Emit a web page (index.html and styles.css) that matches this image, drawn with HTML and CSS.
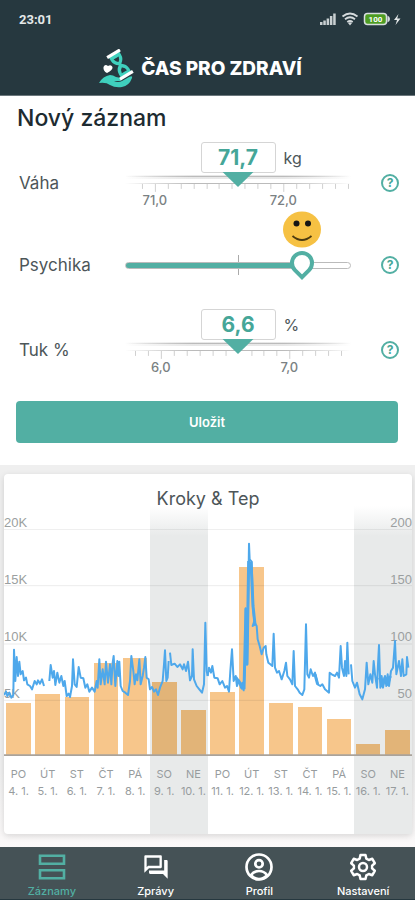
FILE: index.html
```html
<!DOCTYPE html>
<html lang="cs">
<head>
<meta charset="utf-8">
<meta name="viewport" content="width=device-width, initial-scale=1">
<title>Čas pro zdraví</title>
<link rel="stylesheet" href="styles.css">
</head>
<body>
<header class="top">
  <div class="status">
    <span>23:01</span>
    <svg class="status-icons" width="82" height="16" viewBox="0 0 82 16" aria-hidden="true">
      <g fill="#c9d0d2"><path d="M0 11h2.500v3H0zM3.300 9.500h2.500V14H3.300zM6.600 7.500h2.500V14H6.600zM9.900 5h2.500v9H9.900zM13.200 2.500h2.500V14h-2.500z"/></g>
      <g fill="none" stroke="#d5dbdd" stroke-width="1.800"><path d="M22.500 5.500q7.500-6 15 0M25 8.300q5-4 10 0M27.300 11q2.700-2 5.400 0"/></g>
      <path d="M30 14.500l-2-2.500q2-1.500 4 0z" fill="#d5dbdd"/>
      <rect x="44.500" y="2.500" width="22" height="11" rx="3" fill="#4d9c22" stroke="#d8dedf" stroke-width="1.500"/>
      <path d="M67.500 4.500q2.500 1 2.500 3.500t-2.500 3.500z" fill="#d8dedf"/>
      <text x="55.500" y="11" class="battery">100</text>
      <path d="M78.500 3L74 9h3l-1.500 5L80.500 7.500h-3.300z" fill="#e4e8e9"/>
    </svg>
  </div>
  <div class="brand">
    <svg width="35" height="39" viewBox="0 0 35 39" aria-hidden="true">
      <path d="M0 34Q4 27 11 26q3 0 6 2l5 1q2 2-1 3l-6 0q4 2 8 0l7-4q4-2 3 1-3 8-10 9-7 1-12-2-4-3-11-2z" fill="#3fd0bd"/>
      <g transform="translate(21 15.500) rotate(-31)">
        <path d="M-6-12v4q0 5 4.500 8Q-6 3-6 8v4H6V8Q6 3 1.500 0 6-3 6-8v-4z" fill="#3fd0bd"/>
        <path d="M-3-7.500h6q-1 3.500-3 4.500-2-1-3-4.500zM0 3.500Q3 5 3 8.500h-6Q-3 5 0 3.500z" fill="#26383f"/>
        <path d="M-7.500-12.500h15M-7.500 12.500h15" stroke="#fff" stroke-width="3.200"/>
      </g>
      <path d="M8 24q-4-2-3.500-6Q6 14.500 9 17q3-2 4.500 1 .5 3-5.500 6z" fill="#fff"/>
    </svg>
    <span class="brand-name">ČAS PRO ZDRAVÍ</span>
  </div>
</header>

<main>
  <form class="entry">
    <h1>Nový záznam</h1>

    <div class="field">
      <div class="value"><input id="weight" type="text" value="71,7"><span>kg</span></div>
      <label for="weight">Váha</label>
      <svg class="ruler" viewBox="0 0 227 36" aria-hidden="true">
        <defs>
          <linearGradient id="fade"><stop offset="0" stop-color="#aaa" stop-opacity="0"/><stop offset=".3" stop-color="#bbb"/><stop offset=".7" stop-color="#bbb"/><stop offset="1" stop-color="#aaa" stop-opacity="0"/></linearGradient>
        </defs>
        <path d="M0 3h227v4H0z" fill="url(#fade)" opacity=".35"/>
        <path d="M0 4h227v1H0zM0 11h227v1H0z" fill="url(#fade)"/>
        <path class="ticks" d="M17.500 12v5M43.500 12v5M56.500 12v5M69.500 12v5M82.500 12v5M94.500 12v5M107.500 12v5M120.500 12v5M133.500 12v5M146.500 12v5M172.500 12v5M185.500 12v5M198.500 12v5M211.500 12v5M224.500 12v5M30.500 12v8M159.500 12v8"/>
        <path d="M98 0h31l-15.500 15z" fill="#52afa3"/>
        <text x="30" y="33">71,0</text><text x="159" y="33">72,0</text>
      </svg>
      <button type="button" class="help" aria-label="Nápověda: Váha">?</button>
    </div>

    <div class="field mood">
      <svg class="face" width="38" height="37" viewBox="0 0 38 37" aria-hidden="true">
        <ellipse cx="19" cy="18.500" rx="19" ry="18" fill="#f6c143"/>
        <circle cx="13.500" cy="12.500" r="3" fill="#151515"/><circle cx="25" cy="12.500" r="3" fill="#151515"/>
        <path d="M9.500 25q9.500 8 19 0" fill="none" stroke="#4b3a10" stroke-width="1.800"/>
      </svg>
      <label for="mood">Psychika</label>
      <input id="mood" class="slider" type="range" min="0" max="100" value="82">
      <button type="button" class="help" aria-label="Nápověda: Psychika">?</button>
    </div>

    <div class="field">
      <div class="value"><input id="fat" type="text" value="6,6"><span>%</span></div>
      <label for="fat">Tuk %</label>
      <svg class="ruler" viewBox="0 0 227 36" aria-hidden="true">
        <path d="M0 3h227v4H0z" fill="url(#fade)" opacity=".35"/>
        <path d="M0 4h227v1H0zM0 11h227v1H0z" fill="url(#fade)"/>
        <path class="ticks" d="M10.500 12v5M23.500 12v5M49.500 12v5M62.500 12v5M75.500 12v5M88.500 12v5M101.500 12v5M127.500 12v5M139.500 12v5M152.500 12v5M178.500 12v5M191.500 12v5M204.500 12v5M217.500 12v5M36.500 12v8M165.500 12v8"/>
        <path d="M98 0h31l-15.500 15z" fill="#52afa3"/>
        <text x="36" y="33">6,0</text><text x="165" y="33">7,0</text>
      </svg>
      <button type="button" class="help" aria-label="Nápověda: Tuk">?</button>
    </div>

    <button type="submit" class="save">Uložit</button>
  </form>

  <section class="card">
    <h2>Kroky &amp; Tep</h2>
    <div class="chart">
      <ol class="days">
        <li><div class="bar" style="height:52px"></div><span>PO</span><span>4. 1.</span></li>
        <li><div class="bar" style="height:61px"></div><span>ÚT</span><span>5. 1.</span></li>
        <li><div class="bar" style="height:58px"></div><span>ST</span><span>6. 1.</span></li>
        <li><div class="bar" style="height:92px"></div><span>ČT</span><span>7. 1.</span></li>
        <li><div class="bar" style="height:97px"></div><span>PÁ</span><span>8. 1.</span></li>
        <li class="weekend"><div class="bar" style="height:73px"></div><span>SO</span><span>9. 1.</span></li>
        <li class="weekend"><div class="bar" style="height:45px"></div><span>NE</span><span>10. 1.</span></li>
        <li><div class="bar" style="height:63px"></div><span>PO</span><span>11. 1.</span></li>
        <li><div class="bar" style="height:188px"></div><span>ÚT</span><span>12. 1.</span></li>
        <li><div class="bar" style="height:52px"></div><span>ST</span><span>13. 1.</span></li>
        <li><div class="bar" style="height:48px"></div><span>ČT</span><span>14. 1.</span></li>
        <li><div class="bar" style="height:36px"></div><span>PÁ</span><span>15. 1.</span></li>
        <li class="weekend"><div class="bar" style="height:11px"></div><span>SO</span><span>16. 1.</span></li>
        <li class="weekend"><div class="bar" style="height:25px"></div><span>NE</span><span>17. 1.</span></li>
      </ol>
      <div class="axis"><span>20K</span><span>200</span><span>15K</span><span>150</span><span>10K</span><span>100</span><span>5K</span><span>50</span></div>
      <svg class="pulse" viewBox="12 -276 1224 681" preserveAspectRatio="none" aria-hidden="true">
        <path class="grid" d="M12-275H1236M12-106H1236M12 69H1236M12 238H1236"/>
        <path class="base" d="M12 403H1236"/>
        <path class="line" d="M12 222L18 212 22 225 28 215 34 230 40 222 42 86 46 180 50 108 54 165 58 122 62 160 68 150 72 178 78 170 82 190 90 195 96 205 104 180 110 190 114 178 120 188 126 175 132 195M148 180L152 132 158 170 162 150 166 192 172 155 178 185 184 165 190 195 194 180 200 225 206 218 210 228 216 195 219 115 224 190 230 198 236 138 242 170 250 172 256 200 262 190 268 212 276 200 284 212 290 180 293 200 298 115 302 190 308 145 314 190 318 122 324 185 330 130 334 190 338 125 341 105 346 195 352 120 355 165 358 122 362 195 368 210 376 215 384 222 390 180 394 105 400 150 404 190 408 160 412 178 418 115 422 190 428 165 432 140 436 108 440 170 446 175 450 205 456 198 462 212 468 205 474 222 480 200 488 180 492 130 495 88 499 180 503 170 506 120M510 95L514 132 524 128 532 138 540 130 548 145 552 130 558 150 564 122 570 178 576 165 578 85 582 175 590 195 598 205 606 215 612 190 616 5 620 150 623 165"/>
        <path class="line" transform="translate(615 0)" d="M8 165L12 140 18 155 22 135 28 170 38 172 44 190 52 180 60 200 66 195 72 212 76 150 81 85 86 180 92 165 96 195 102 178 108 200 112 185 116 208 120 130 122-38 126 130 130-100 132-232 134-185 140-178 144-40 148 0 143 15 152 10 155 15 158 55 164 75 170 100 176 80 182 75 184 100 190 125 196 130 202 135 206 38 210 140 216 155 222 150 230 175 238 150 243 125 247 165 255 175 262 190 266 90 270 195 278 205 284 215 292 222 298 205 303 10 307 160 312 170 317 145 324 165 330 155 338 190 346 195 352 190 360 205 372 215 374 155 380 160 390 165 396 155 402 170 407 75 411 140 417 165 420 120 424 165 427 65 431 160M438 130L442 180 450 200 456 185 464 220 472 235 480 205 485 125 490 190 496 160 502 185 506 120 510 160 516 200 519 130 522 72 526 200 530 165 534 200 540 165 544 195 548 160 552 195 558 150 564 140 570 60 574 160 582 120 588 165 592 115 596 165 604 160 606 108 610 140"/>
        <path class="line dense" transform="translate(615 0)" d="M92 168L104 185 114 205M117 205L123-35 126 130 131-180M138-178L144-45 150 10M524 170L532 195 540 170 548 190 556 165M330 160L338 190"/>
      </svg>
    </div>
  </section>
</main>

<nav class="tabs">
  <a href="#zaznamy" class="active">
    <svg width="28" height="28" viewBox="0 0 28 28" fill="none" stroke="currentColor" stroke-width="2.600"><path d="M2 2.800h24v8H2zM2 17.200h24v8H2z"/></svg>
    <span>Záznamy</span>
  </a>
  <a href="#zpravy">
    <svg width="28" height="28" viewBox="0 0 24 24" fill="currentColor"><path d="M15 4v7H5.170L4 12.170V4h11m1-2H3c-.55 0-1 .45-1 1v14l4-4h10c.55 0 1-.45 1-1V3c0-.55-.45-1-1-1zm5 4h-2v9H6v2c0 .55.450 1 1 1h11l4 4V7c0-.55-.45-1-1-1z"/></svg>
    <span>Zprávy</span>
  </a>
  <a href="#profil">
    <svg width="28" height="28" viewBox="0 0 28 28" fill="none" stroke="currentColor" stroke-width="2.700"><circle cx="14" cy="14" r="12.500"/><circle cx="14" cy="10.800" r="3.700"/><path d="M6 22q3-4 8-4t8 4q-3 4-8 4t-8-4z"/></svg>
    <span>Profil</span>
  </a>
  <a href="#nastaveni">
    <svg width="28" height="28" viewBox="0 0 28 28" fill="none" stroke="currentColor" stroke-width="2.500" stroke-linejoin="round"><path d="M11.500 2h5l.8 3.600 2.500 1.400 3.500-1.200 2.500 4.400-2.700 2.400v2.800l2.700 2.400-2.500 4.400-3.500-1.200-2.500 1.400-.8 3.600h-5l-.8-3.600L8.200 21l-3.500 1.200-2.500-4.400 2.700-2.400v-2.800l-2.700-2.400 2.500-4.400L8.200 7l2.500-1.400z"/><circle cx="14" cy="14" r="4"/></svg>
    <span>Nastavení</span>
  </a>
</nav>
</body>
</html>
```
FILE: styles.css
```css
* { box-sizing: border-box; }
body {
  margin: 0;
  min-height: 100vh;
  display: flex;
  flex-direction: column;
  background: #fff;
  color: #4d5659;
  font-family: Inter, "Liberation Sans", sans-serif;
}
h1, h2, ol { margin: 0; padding: 0; }
button, input { font-family: inherit; }

.top {
  height: 96px;
  background: #26383f;
  border-bottom: 1px solid #6b777c;
  color: #fff;
}
.status {
  display: flex;
  justify-content: space-between;
  align-items: center;
  height: 38px;
  padding: 0 13px 0 19px;
  font: 700 13px Roboto, sans-serif;
  color: #e4e8e9;
}
.battery { font: 700 8px Roboto, sans-serif; fill: #fff; text-anchor: middle; }
.brand {
  display: flex;
  justify-content: center;
  align-items: center;
  gap: 7px;
  height: 60px;
  padding-right: 14px;
}
.brand-name { font-size: 19px; font-weight: 800; }

.entry {
  padding: 8px 17px 22px 16px;
  background: #fff;
}
.entry h1 {
  padding-left: 1px;
  font-size: 23px;
  line-height: 28px;
  font-weight: 500;
  color: #1d2b31;
}
.field {
  display: grid;
  grid-template-columns: 106px 1fr 47px;
  grid-template-rows: 30px 22px 14px;
  margin-top: 10px;
  padding: 0 0 0 3px;
}
.field label { grid-area: 2 / 1; align-self: center; font-size: 17px; }
.value {
  grid-area: 1 / 2;
  display: grid;
  grid-template-columns: 1fr 75px 1fr;
  gap: 8px;
  align-items: center;
  font-size: 16px;
}
.value input {
  grid-column: 2;
  width: 75px;
  height: 31px;
  padding: 0;
  border: 1px solid #d5d5d5;
  border-radius: 3px;
  background: #fff;
  color: #45a698;
  font-size: 21px;
  font-weight: 700;
  text-align: center;
}
.ruler { grid-area: 2 / 2 / 4 / 3; width: 100%; overflow: visible; }
.ruler text { font-size: 13px; font-weight: 500; text-anchor: middle; fill: #7a8183; }
.ticks { stroke: #d0d0d0; fill: none; }
.help {
  grid-area: 2 / 3;
  place-self: center end;
  width: 18px;
  height: 18px;
  margin-right: -1px;
  padding: 0;
  border: 2px solid #52afa3;
  border-radius: 50%;
  background: none;
  color: #45a698;
  font-size: 12px;
  line-height: 14px;
  font-weight: 700;
}
.mood {
  grid-template-rows: 37px 34px;
  margin-top: 3px;
  margin-bottom: 27px;
}
.face { grid-area: 1 / 2; margin-left: 70%; }
.slider {
  grid-area: 2 / 2;
  appearance: none;
  width: 100%;
  height: 34px;
  margin: 0;
  background: linear-gradient(#aaa, #aaa) center / 1px 20px no-repeat;
}
.slider::-webkit-slider-runnable-track {
  height: 7px;
  border: 1px solid #bbb;
  border-radius: 4px;
  background: linear-gradient(90deg, #52afa3 78%, #fff 78%) border-box;
}
.slider::-webkit-slider-thumb {
  appearance: none;
  width: 24px;
  height: 24px;
  margin-top: -12px;
  border: 4px solid #52afa3;
  border-radius: 50% 50% 0 50%;
  background: #fff;
  transform: rotate(45deg);
}
.save {
  display: block;
  width: 100%;
  height: 42px;
  margin-top: 26px;
  border: 0;
  border-radius: 4px;
  background: #52afa3;
  color: #fff;
  font-size: 13px;
  font-weight: 600;
}

main { flex: 1; padding-bottom: 12px; background: linear-gradient(#efefef 90%, #fbf9f9); }
.card {
  margin: 9px 3px 0 4px;
  border-radius: 4px;
  background: #fff;
  box-shadow: 0 2px 6px #0002;
}
.card h2 {
  height: 32px;
  padding-top: 14px;
  font-size: 18px;
  line-height: 22px;
  font-weight: 400;
  text-align: center;
}
.chart { position: relative; }
.days { display: flex; list-style: none; }
.days li {
  display: flex;
  flex: 1 1 0;
  flex-direction: column;
  align-items: center;
  justify-content: flex-end;
  height: 328px;
  min-width: 0;
  padding-bottom: 34px;
  font-size: 11px;
  line-height: 17px;
  font-weight: 400;
  color: #979c9e;
  white-space: nowrap;
}
.days .weekend { background: linear-gradient(#e8eaea00, #e8eaea 30px); }
.bar { width: 84%; margin-bottom: 11px; background: #f7c68b; }
.weekend .bar { background: #e2b478; }
.axis {
  position: absolute;
  inset: 8px 0 auto;
  display: grid;
  grid-template-columns: 1fr 1fr;
  grid-auto-rows: 57px;
  font: 13px/17px "Liberation Sans", sans-serif;
  color: #9b9fa0;
}
.axis span:nth-child(even) { text-align: right; }
.pulse {
  position: absolute;
  top: 23px;
  left: 0;
  width: 100%;
  height: 227px;
}
.pulse path { fill: none; vector-effect: non-scaling-stroke; }
.pulse .grid { stroke: #00000014; stroke-width: 1px; }
.pulse .base { stroke: #aaa39b; stroke-width: 2px; }
.line { stroke: #4ea8eb; stroke-width: 2px; stroke-linejoin: round; }
.pulse .dense { stroke-width: 3px; }

.tabs {
  display: flex;
  height: 53px;
  background: #455256;
  border-bottom: 1px solid #26383f;
}
.tabs a {
  display: flex;
  flex: 1;
  flex-direction: column;
  align-items: center;
  gap: 4px;
  padding-top: 6px;
  color: #fff;
  font-size: 11px;
  line-height: 13px;
  font-weight: 500;
  text-decoration: none;
}
.tabs .active { color: #52afa3; }
```
